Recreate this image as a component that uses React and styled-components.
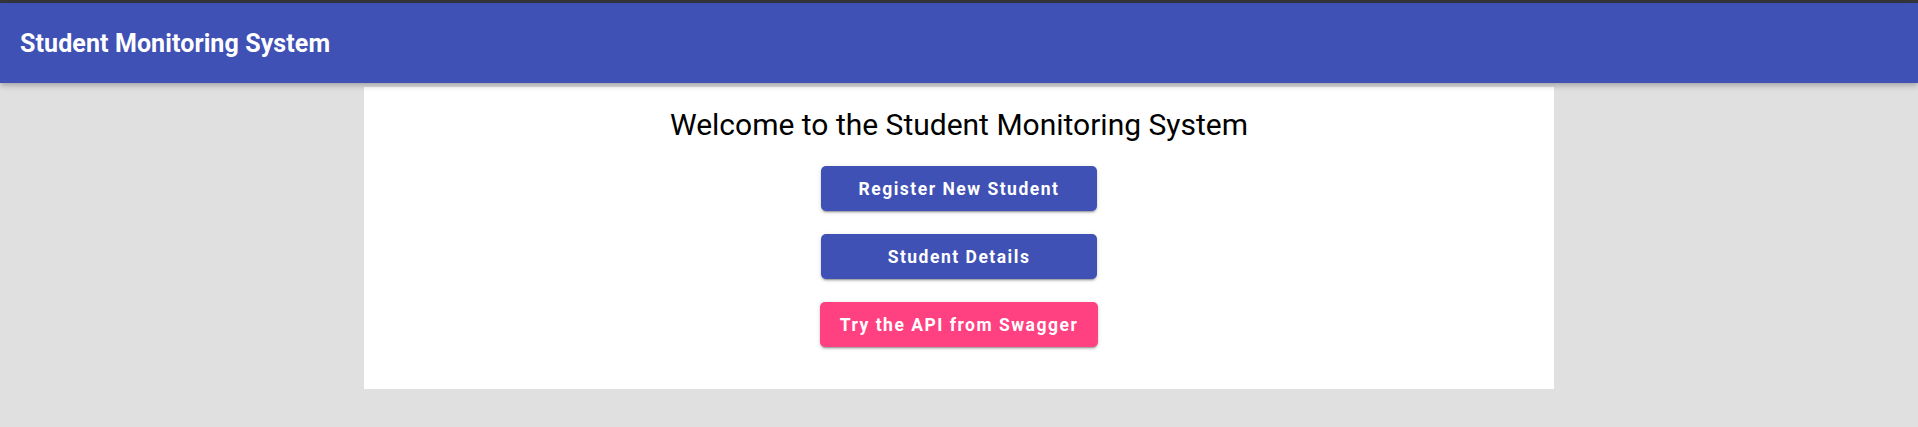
import React from 'react'
import styled, { createGlobalStyle } from 'styled-components'

const GlobalStyle = createGlobalStyle`
	html, body {
		margin: 0;
		padding: 0;
		background: #e0e0e0;
		font-family: Roboto, "Liberation Sans", Arial, sans-serif;
	}
`;

const Page = styled.div`
	min-height: 427px;
	background: #e0e0e0;
	border-top: 3px solid #35363a;
`;

const AppBar = styled.header`
	height: 80px;
	background: #3f51b5;
	color: #fff;
	display: flex;
	align-items: center;
	padding: 0 20px;
	box-shadow: 0 2px 4px -1px rgba(0,0,0,0.15), 0 4px 5px 0 rgba(0,0,0,0.1), 0 1px 10px 0 rgba(0,0,0,0.08);
	position: relative;
	z-index: 1;
`;

const Title = styled.h1`
	margin: 0;
	font-size: 25px;
	font-weight: 700;
	letter-spacing: 0.1px;
`;

const Card = styled.main`
	width: 1190px;
	margin: 4px auto 0;
	background: #fff;
	padding: 18px 0 42px;
	display: flex;
	flex-direction: column;
	align-items: center;
`;

const Heading = styled.h2`
	margin: 0 0 21px;
	font-size: 30px;
	line-height: 40px;
	font-weight: 400;
	color: #000;
`;

const Actions = styled.div`
	display: flex;
	flex-direction: column;
	align-items: center;
	gap: 23px;
`;

const Button = styled.button`
	min-width: 276px;
	height: 45px;
	padding: 0 20px;
	border: none;
	border-radius: 5px;
	background: ${p => p.$accent ? '#ff4081' : '#3f51b5'};
	color: #fff;
	font-family: Roboto, "Liberation Sans", Arial, sans-serif;
	font-size: 17.5px;
	font-weight: 700;
	letter-spacing: 1.5px;
	cursor: pointer;
	box-shadow: 0 3px 1px -2px rgba(0,0,0,0.2), 0 2px 2px 0 rgba(0,0,0,0.14), 0 1px 5px 0 rgba(0,0,0,0.12);
`;

export default function App() {
	return (
		<Page>
			<GlobalStyle />
			<AppBar>
				<Title>Student Monitoring System</Title>
			</AppBar>
			<Card>
				<Heading>Welcome to the Student Monitoring System</Heading>
				<Actions>
					<Button>Register New Student</Button>
					<Button>Student Details</Button>
					<Button $accent>Try the API from Swagger</Button>
				</Actions>
			</Card>
		</Page>
	)
}
